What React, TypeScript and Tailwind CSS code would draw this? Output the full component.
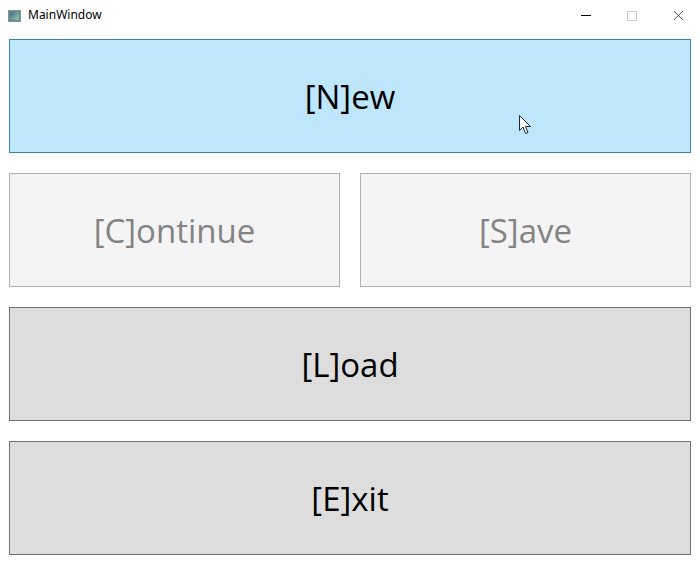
import { X } from 'lucide-react';

const font = { fontFamily: '"Open Sans", "Noto Sans", sans-serif' };

function TitleBar() {
  return (
    <div className="flex h-[31px] items-center bg-white text-[12px] text-black">
      <div className="ml-[8px] flex h-[12px] w-[13px] items-center justify-center border border-[#8a8f94] bg-[#5e8f8c]">
        <div className="h-[8px] w-[9px] bg-[linear-gradient(135deg,#3d6e92,#9cc7a6)]" />
      </div>
      <span className="ml-[7px] -mt-[2px]">MainWindow</span>
      <div className="ml-auto mr-[-1px] flex h-full items-center">
        <div className="flex w-[46px] justify-center">
          <div className="h-px w-[10px] bg-black" />
        </div>
        <div className="flex w-[46px] justify-center">
          <div className="h-[10px] w-[10px] border border-[#cccccc]" />
        </div>
        <div className="flex w-[46px] justify-center">
          <X size={17} strokeWidth={0.9} className="text-black" />
        </div>
      </div>
    </div>
  );
}

type Kind = 'hover' | 'disabled' | 'normal';

function MenuButton({ label, kind }: { label: string; kind: Kind }) {
  const styles: Record<Kind, string> = {
    hover: 'border-[#3c7fb1] bg-[#bee6fd] text-black',
    disabled: 'border-[#adb2b5] bg-[#f4f4f4] text-[#838383]',
    normal: 'border-[#707070] bg-[#dddddd] text-black',
  };
  return (
    <div
      className={`flex h-[114px] flex-1 items-center justify-center border pt-[2px] text-[33px] ${styles[kind]}`}
      style={font}
    >
      {label}
    </div>
  );
}

function Cursor() {
  return (
    <svg className="absolute left-[519px] top-[115px]" width="13" height="20" viewBox="0 0 13 20">
      <path
        d="M0.5 0.5 L0.5 15.5 L4 12 L6.5 18.5 L9 17.5 L6.5 11.5 L11.5 11.5 Z"
        fill="white"
        stroke="#1f2a33"
        strokeWidth="1"
        strokeLinejoin="round"
      />
    </svg>
  );
}

export default function App() {
  return (
    <div className="relative h-[564px] w-[700px] overflow-hidden bg-white">
      <TitleBar />
      <div className="flex flex-col gap-[20px] px-[9px] pt-[8px]">
        <div className="flex">
          <MenuButton label="[N]ew" kind="hover" />
        </div>
        <div className="flex gap-[20px]">
          <MenuButton label="[C]ontinue" kind="disabled" />
          <MenuButton label="[S]ave" kind="disabled" />
        </div>
        <div className="flex">
          <MenuButton label="[L]oad" kind="normal" />
        </div>
        <div className="flex">
          <MenuButton label="[E]xit" kind="normal" />
        </div>
      </div>
      <Cursor />
    </div>
  );
}
